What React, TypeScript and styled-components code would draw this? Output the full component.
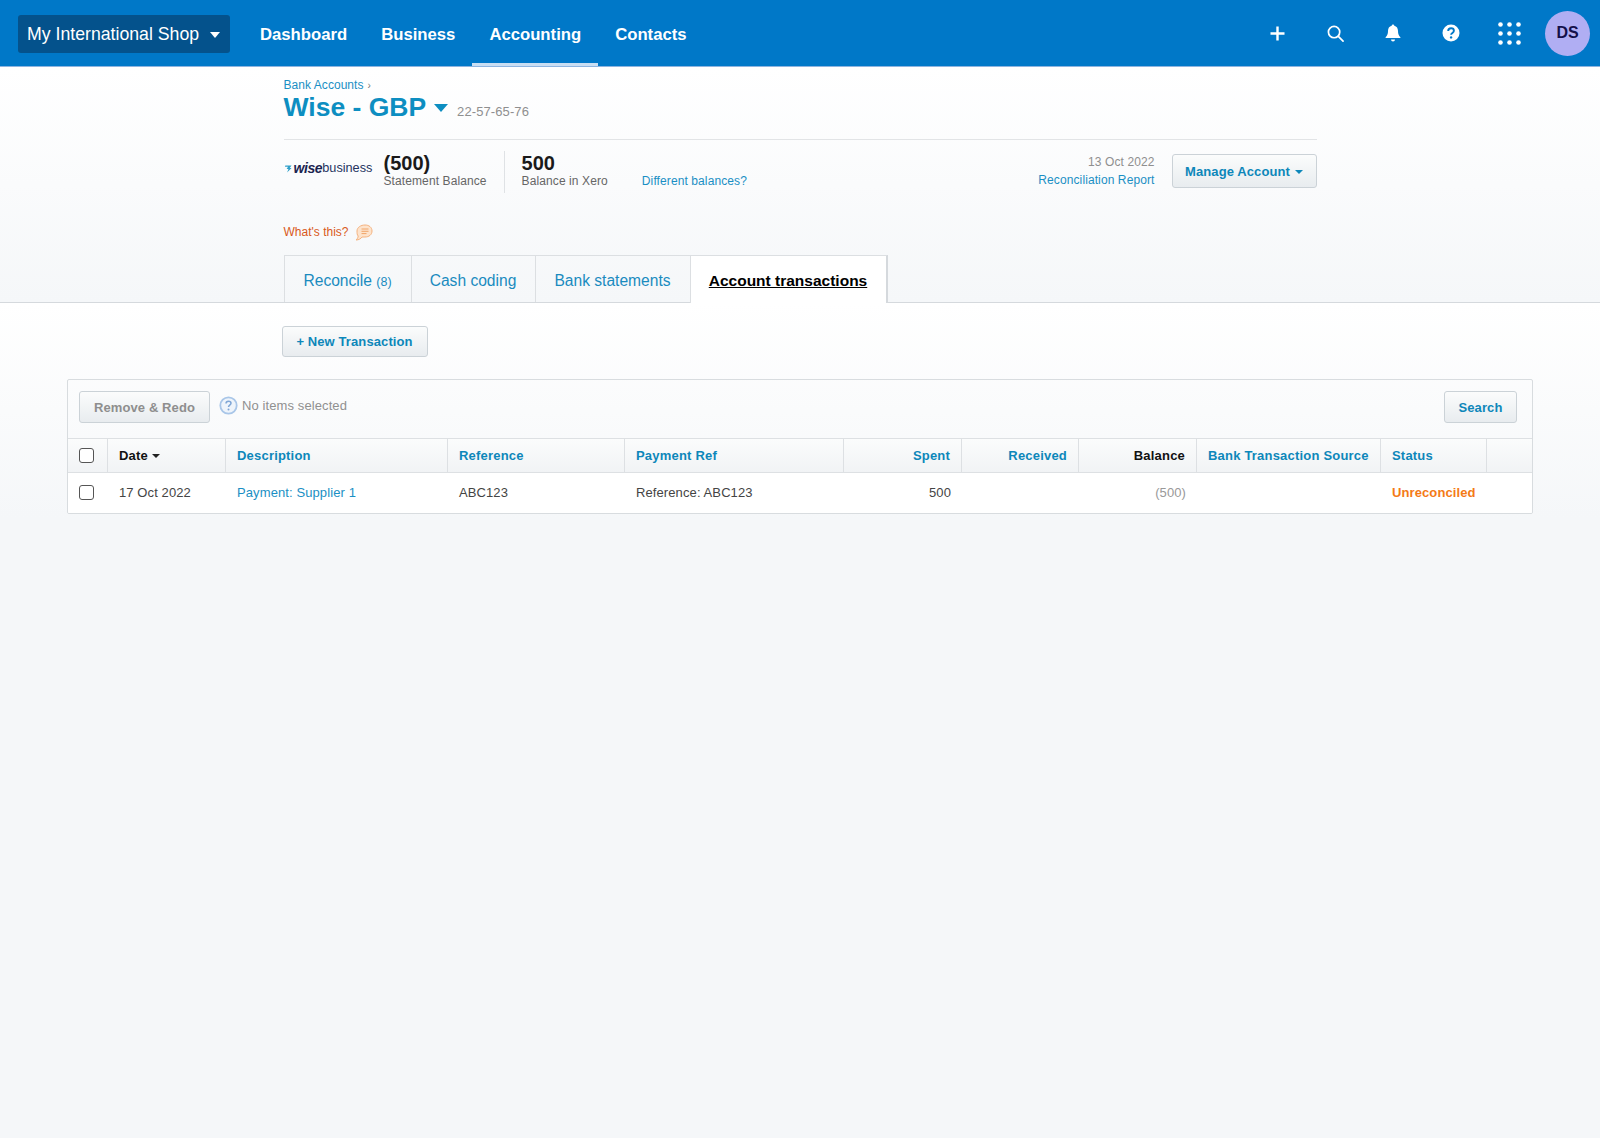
import React from "react";
import styled, { createGlobalStyle } from "styled-components";

const Global = createGlobalStyle`
  html, body { margin: 0; padding: 0; background: #f5f7f9; }
  body { font-family: "Liberation Sans", Arial, sans-serif; font-size: 13px; color: #333; min-height: 1138px; }
  * { box-sizing: border-box; }
`;

const TopBar = styled.header`
  height: 67px;
  background: #0078c8;
  border-bottom: 1px solid #8db4e0;
  display: flex;
  align-items: stretch;
  padding-left: 18px;
  color: #fff;
`;
const OrgButton = styled.div`
  width: 212px;
  height: 38px;
  margin-top: 15px;
  margin-right: 13px;
  background: #04528c;
  border-radius: 3px;
  display: flex;
  align-items: center;
  justify-content: space-between;
  padding: 0 10px 0 9px;
  font-size: 17.7px;
`;
const NavItem = styled.div<{ $active?: boolean }>`
  height: 66px;
  padding: 6px 17px 0;
  display: flex;
  align-items: center;
  font-size: 16.7px;
  font-weight: 700;
  border-bottom: 3px solid ${(p) => (p.$active ? "#c9def3" : "transparent")};
`;
const IconTray = styled.div`
  margin-left: auto;
  display: flex;
  align-items: center;
  padding-right: 10px;
`;
const IconSlot = styled.div`
  width: 58px;
  height: 58px;
  display: flex;
  align-items: center;
  justify-content: center;
`;
const Avatar = styled.div`
  width: 45px;
  height: 45px;
  margin-left: 7px;
  border-radius: 50%;
  background: #b0aef3;
  color: #14104a;
  font-size: 16px;
  font-weight: 700;
  display: flex;
  align-items: center;
  justify-content: center;
`;

const TopSection = styled.section`
  height: 236px;
  background: linear-gradient(#ffffff 0%, #f5f7f9 100%);
  border-bottom: 1px solid #d5d9dd;
`;
const Container = styled.div`
  width: 1033px;
  margin: 0 auto;
`;
const Crumb = styled.div`
  padding-top: 11px;
  font-size: 12px;
  line-height: 15px;
  letter-spacing: 0.05px;
  color: #1a8fc4;
  span { color: #777; font-size: 10px; margin-left: 4px; }
`;
const TitleRow = styled.div`
  height: 47px;
  display: flex;
  align-items: flex-start;
  border-bottom: 1px solid #e2e4e6;
`;
const Title = styled.h1`
  margin: 0;
  font-size: 26.5px;
  line-height: 28px;
  font-weight: 700;
  color: #0d8ec1;
`;
const TitleCaret = styled.span`
  width: 0;
  height: 0;
  margin: 11px 9px 0 8px;
  border-left: 7px solid transparent;
  border-right: 7px solid transparent;
  border-top: 8px solid #0d8ec1;
`;
const AccountNo = styled.span`
  margin-top: 11px;
  font-size: 13px;
  line-height: 16px;
  color: #8f8f8f;
  letter-spacing: 0.1px;
`;
const SummaryRow = styled.div`
  display: flex;
  align-items: flex-start;
  margin-top: 11px;
  height: 44px;
`;
const Logo = styled.div`
  width: 100px;
  display: flex;
  align-items: center;
  margin-top: 9px;
  color: #25345f;
  font-size: 12.7px;
  line-height: 16px;
  b { font-size: 14px; font-style: italic; font-weight: 700; letter-spacing: -0.4px; margin-left: 2px; color: #1a2450; }
`;
const Stat = styled.div<{ $divided?: boolean }>`
  height: 42px;
  padding-right: 17px;
  margin-right: 17px;
  border-right: ${(p) => (p.$divided ? "1px solid #dfe2e5" : "0")};
`;
const StatValue = styled.div`
  font-size: 20px;
  font-weight: 700;
  line-height: 24px;
  color: #1a1a1a;
`;
const StatLabel = styled.div`
  font-size: 12px;
  line-height: 14px;
  margin-top: -1px;
  letter-spacing: 0.1px;
  color: #666;
`;
const DiffLink = styled.a`
  font-size: 12px;
  line-height: 14px;
  margin-top: 23px;
  letter-spacing: 0.1px;
  color: #1a8fc4;
`;
const ReconcileBlock = styled.div`
  margin-left: auto;
  margin-right: 17px;
  text-align: right;
  font-size: 12px;
  line-height: 14px;
  letter-spacing: 0.1px;
`;
const ReconcileDate = styled.div`
  margin-bottom: 4px;
  margin-top: 4px;
  color: #8f8f8f;
`;
const ReconcileLink = styled.a`
  color: #1a8fc4;
`;
const Button = styled.button<{ $muted?: boolean; $w: number }>`
  width: ${(p) => p.$w}px;
  height: 32px;
  padding: 0;
  border: 1px solid #cbd2d7;
  border-radius: 3px;
  background: linear-gradient(#fbfcfc, #e8ecef);
  font-family: inherit;
  font-size: 13px;
  font-weight: 700;
  letter-spacing: 0.1px;
  color: ${(p) => (p.$muted ? "#8e8e8e" : "#0d87ba")};
  display: inline-flex;
  align-items: center;
  justify-content: center;
  gap: 5px;
`;
const ManageButton = styled(Button)`
  margin-top: 3px;
  height: 34px;
`;
const SmallCaret = styled.span`
  width: 0;
  height: 0;
  border-left: 4px solid transparent;
  border-right: 4px solid transparent;
  border-top: 4px solid #0d87ba;
  margin-top: 1px;
`;
const WhatsThis = styled.div`
  margin-top: 27px;
  height: 20px;
  display: flex;
  align-items: center;
  gap: 7px;
  font-size: 12px;
  color: #d9591c;
`;
const Tabs = styled.nav`
  display: flex;
  margin-top: 13px;
`;
const Tab = styled.div<{ $active?: boolean; $w: number }>`
  width: ${(p) => p.$w}px;
  height: ${(p) => (p.$active ? "48px" : "47px")};
  margin-bottom: -1px;
  padding-top: 3px;
  display: flex;
  align-items: center;
  justify-content: center;
  font-size: ${(p) => (p.$active ? "15.5px" : "15.6px")};
  border-top: 1px solid #dcdfe2;
  border-left: 1px solid #dcdfe2;
  background: ${(p) => (p.$active ? "#fff" : "transparent")};
  color: ${(p) => (p.$active ? "#000" : "#1a8bbf")};
  font-weight: ${(p) => (p.$active ? 700 : 400)};
  text-decoration: ${(p) => (p.$active ? "underline" : "none")};
  border-right: ${(p) => (p.$active ? "2px solid #d5d9dd" : "0")};
  small { font-size: 12.5px; }
`;

const Lower = styled.section`
  background: linear-gradient(#ffffff 0%, #f5f7f9 100%);
  height: 215px;
  padding-top: 23px;
`;
const NewButton = styled(Button)`
  height: 31px;
  margin-left: -2px;
  gap: 0;
`;
const Panel = styled.div`
  margin: 22px 67px 0;
  border: 1px solid #d8dcdf;
  border-radius: 2px;
  overflow: hidden;
`;
const Toolbar = styled.div`
  height: 58px;
  display: flex;
  align-items: flex-start;
  padding: 11px 15px 0 11px;
`;
const HelpNote = styled.div`
  height: 28px;
  margin-left: 9px;
  display: flex;
  align-items: center;
  gap: 4px;
  color: #909090;
  font-size: 13px;
  letter-spacing: 0.1px;
`;
const SearchButton = styled(Button)`
  margin-left: auto;
`;
const Grid = styled.div<{ $head?: boolean }>`
  display: grid;
  grid-template-columns: 40px 118px 222px 177px 219px 118px 117px 118px 184px 106px 1fr;
  height: ${(p) => (p.$head ? "35px" : "40px")};
  background: ${(p) => (p.$head ? "linear-gradient(#fbfcfc, #f1f3f5)" : "#fff")};
  border-top: ${(p) => (p.$head ? "1px solid #dde0e3" : "0")};
  border-bottom: ${(p) => (p.$head ? "1px solid #dde0e3" : "0")};
`;
const HeadCell = styled.div<{ $right?: boolean; $dark?: boolean }>`
  display: flex;
  align-items: center;
  justify-content: ${(p) => (p.$right ? "flex-end" : "flex-start")};
  padding: 0 11px;
  border-right: 1px solid #dde0e3;
  font-size: 13px;
  font-weight: 700;
  color: ${(p) => (p.$dark ? "#111" : "#0d87ba")};
  letter-spacing: 0.2px;
  gap: 4px;
`;
const LastHead = styled.div``;
const Cell = styled.div<{ $right?: boolean; $tone?: string; $bold?: boolean }>`
  display: flex;
  align-items: center;
  justify-content: ${(p) => (p.$right ? "flex-end" : "flex-start")};
  padding: 0 11px 2px;
  font-size: 13px;
  letter-spacing: 0.1px;
  color: ${(p) => p.$tone || "#444"};
  font-weight: ${(p) => (p.$bold ? 700 : 400)};
`;
const CheckCell = styled.div<{ $head?: boolean }>`
  display: flex;
  align-items: center;
  justify-content: center;
  padding-right: 3px;
  padding-bottom: ${(p) => (p.$head ? "0" : "2px")};
  border-right: ${(p) => (p.$head ? "1px solid #dde0e3" : "0")};
`;
const Check = styled.span`
  width: 15px;
  height: 15px;
  border: 1px solid #555;
  border-radius: 3px;
  background: #fff;
`;
const DateCaret = styled.span`
  width: 0;
  height: 0;
  border-left: 4px solid transparent;
  border-right: 4px solid transparent;
  border-top: 4px solid #222;
  margin-top: 1px;
`;

const Caret = styled.span`
  width: 0;
  height: 0;
  border-left: 5.5px solid transparent;
  border-right: 5.5px solid transparent;
  border-top: 6px solid #fff;
  margin-top: 1px;
`;

const Plus = () => (
  <svg width="15" height="15" viewBox="0 0 15 15" fill="none" stroke="#fff" strokeWidth="2.4">
    <path d="M7.5 0.500v14M0.500 7.500h14" />
  </svg>
);
const Lens = () => (
  <svg width="17" height="17" viewBox="0 0 18 18" fill="none" stroke="#fff" strokeWidth="1.8" strokeLinecap="round">
    <circle cx="7.500" cy="7.500" r="6" />
    <path d="M12 12l5 5" />
  </svg>
);
const Bell = () => (
  <svg width="16" height="18" viewBox="0 0 16 18" fill="#fff">
    <path d="M8 0.500c.8 0 1.300.6 1.300 1.300 2.500.6 3.700 2.600 3.700 5.200 0 3 .7 4.600 2.400 6.200v.8H.6v-.8C2.300 11.600 3 10 3 7c0-2.600 1.200-4.600 3.700-5.200C6.700 1.100 7.200.5 8 .5z" />
    <path d="M6 15.500h4a2 2 0 0 1-4 0z" />
  </svg>
);
const Help = () => (
  <svg width="18" height="18" viewBox="0 0 18 18">
    <circle cx="9" cy="9" r="8.500" fill="#fff" />
    <path d="M6.200 7c0-1.700 1.200-2.700 2.900-2.700 1.600 0 2.800.9 2.800 2.400 0 2.200-2.800 2.200-2.800 4.100" fill="none" stroke="#0078c8" strokeWidth="1.900" />
    <circle cx="9.100" cy="13.400" r="1.200" fill="#0078c8" />
  </svg>
);
const Dots = () => (
  <svg width="23" height="23" viewBox="0 0 23 23" fill="#fff">
    {[2.500, 11.500, 20.500].flatMap((y) =>
      [2.500, 11.500, 20.500].map((x) => <circle key={`${x}-${y}`} cx={x} cy={y} r="2.300" />)
    )}
  </svg>
);
const Flag = () => (
  <svg width="8" height="9" viewBox="0 0 9 9" fill="#2f9fc9">
    <path d="M1.500 1h7L6.500 4h2L3.500 9l1.500-4H3l1.500-2.500H1z" />
  </svg>
);
const Bubble = () => (
  <svg width="18" height="17" viewBox="0 0 18 17">
    <path d="M10 1c4 0 7 2.300 7 6s-3 6-7 6H7c-1 1.500-3 3-6 3 1.200-1 2-2.200 2.200-4C2 10.800 2 9 2 7c0-3.700 4-6 8-6z" fill="#fde3cc" stroke="#f5b27e" />
    <path d="M6.500 5h7M6.500 7.300h7M6.500 9.600h5" stroke="#f1a468" strokeWidth="1" />
  </svg>
);
const QuestionBadge = () => (
  <svg width="19" height="19" viewBox="0 0 19 19">
    <circle cx="9.500" cy="9.500" r="8.200" fill="#eef4fb" stroke="#a9c6e8" strokeWidth="1.800" />
    <path d="M7 7.500c0-1.500 1-2.300 2.500-2.300s2.500.8 2.500 2c0 1.900-2.500 1.900-2.500 3.700" fill="none" stroke="#7fa6d6" strokeWidth="1.500" />
    <circle cx="9.500" cy="13.500" r="1" fill="#7fa6d6" />
  </svg>
);

const columns = [
  { label: "Description" },
  { label: "Reference" },
  { label: "Payment Ref" },
  { label: "Spent", right: true },
  { label: "Received", right: true },
  { label: "Balance", right: true, dark: true },
  { label: "Bank Transaction Source" },
  { label: "Status" },
];

export default function App() {
  return (
    <>
      <Global />
      <TopBar>
        <OrgButton>
          My International Shop
          <Caret />
        </OrgButton>
        <NavItem>Dashboard</NavItem>
        <NavItem>Business</NavItem>
        <NavItem $active>Accounting</NavItem>
        <NavItem>Contacts</NavItem>
        <IconTray>
          <IconSlot><Plus /></IconSlot>
          <IconSlot><Lens /></IconSlot>
          <IconSlot><Bell /></IconSlot>
          <IconSlot><Help /></IconSlot>
          <IconSlot><Dots /></IconSlot>
          <Avatar>DS</Avatar>
        </IconTray>
      </TopBar>
      <TopSection>
        <Container>
          <Crumb>Bank Accounts<span>›</span></Crumb>
          <TitleRow>
            <Title>Wise - GBP</Title>
            <TitleCaret />
            <AccountNo>22-57-65-76</AccountNo>
          </TitleRow>
          <SummaryRow>
            <Logo><Flag /><b>wise</b>business</Logo>
            <Stat $divided>
              <StatValue>(500)</StatValue>
              <StatLabel>Statement Balance</StatLabel>
            </Stat>
            <Stat>
              <StatValue>500</StatValue>
              <StatLabel>Balance in Xero</StatLabel>
            </Stat>
            <DiffLink>Different balances?</DiffLink>
            <ReconcileBlock>
              <ReconcileDate>13 Oct 2022</ReconcileDate>
              <ReconcileLink>Reconciliation Report</ReconcileLink>
            </ReconcileBlock>
            <ManageButton $w={145}>Manage Account <SmallCaret /></ManageButton>
          </SummaryRow>
          <WhatsThis>What's this? <Bubble /></WhatsThis>
          <Tabs>
            <Tab $w={127}><span>Reconcile <small>(8)</small></span></Tab>
            <Tab $w={124}>Cash coding</Tab>
            <Tab $w={155}>Bank statements</Tab>
            <Tab $active $w={198}>Account transactions</Tab>
          </Tabs>
        </Container>
      </TopSection>
      <Lower>
        <Container>
          <NewButton $w={146}>+ New Transaction</NewButton>
        </Container>
        <Panel>
          <Toolbar>
            <Button $muted $w={131}>Remove &amp; Redo</Button>
            <HelpNote><QuestionBadge />No items selected</HelpNote>
            <SearchButton $w={73}>Search</SearchButton>
          </Toolbar>
          <Grid $head>
            <CheckCell $head><Check /></CheckCell>
            <HeadCell $dark>Date <DateCaret /></HeadCell>
            {columns.map((c) => (
              <HeadCell key={c.label} $right={c.right} $dark={c.dark}>{c.label}</HeadCell>
            ))}
            <LastHead />
          </Grid>
          <Grid>
            <CheckCell><Check /></CheckCell>
            <Cell>17 Oct 2022</Cell>
            <Cell $tone="#1a8fc4">Payment: Supplier 1</Cell>
            <Cell>ABC123</Cell>
            <Cell>Reference: ABC123</Cell>
            <Cell $right>500</Cell>
            <Cell $right />
            <Cell $right $tone="#999">(500)</Cell>
            <Cell />
            <Cell $bold $tone="#f47a16">Unreconciled</Cell>
            <Cell />
          </Grid>
        </Panel>
      </Lower>
    </>
  );
}
